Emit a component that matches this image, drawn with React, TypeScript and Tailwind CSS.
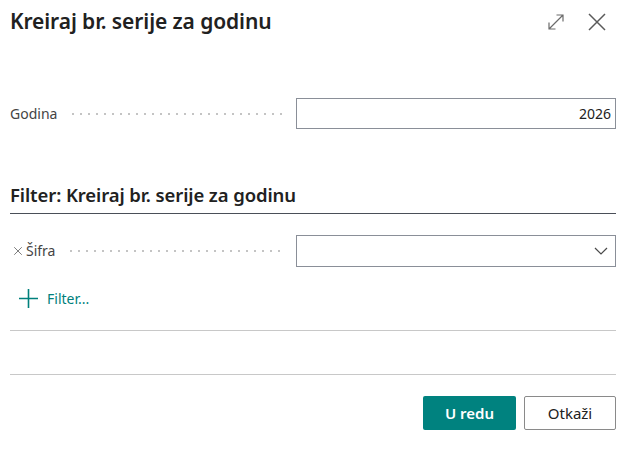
import { X } from "lucide-react";

const Dots = () => (
  <div className="flex-1 h-[4px] mx-[12px] bg-[radial-gradient(circle,#c4c4c4_1px,transparent_1.3px)] bg-[length:8px_4px] bg-repeat-x" />
);

const App = () => {
  return (
    <div className="w-[630px] h-[449px] bg-white pl-[10px] pr-[14px] text-[#212121] font-['Noto_Sans',sans-serif] overflow-hidden">
      <div className="flex items-center h-[44px]">
        <h1 className="text-[21px] font-semibold tracking-[-0.1px] mr-auto">Kreiraj br. serije za godinu</h1>
        <svg width="18" height="18" viewBox="0 0 18 18" className="mr-[22px] text-[#6b6b6b]" fill="none" stroke="currentColor" strokeWidth="1.2">
          <path d="M2 16 L16 2 M9.5 2 H16 V8.5 M2 9.5 V16 H8.5" />
        </svg>
        <svg width="20" height="20" viewBox="0 0 20 20" className="mr-[9px] text-[#5a5a5a]" fill="none" stroke="currentColor" strokeWidth="1.5">
          <path d="M2 2 L18 18 M18 2 L2 18" />
        </svg>
      </div>

      <div className="flex items-center mt-[54px] h-[31px]">
        <div className="flex items-center w-[286px]">
          <span className="text-[14px] text-[#444]">Godina</span>
          <Dots />
        </div>
        <div className="flex-1 h-[31px] border border-[#8a8f98] flex items-center justify-end px-[4px] text-[14px]">2026</div>
      </div>

      <div className="mt-[52px] border-b border-[#4a4f58] pb-[4px]">
        <h2 className="text-[18.5px] font-semibold tracking-[-0.1px]">Filter: Kreiraj br. serije za godinu</h2>
      </div>

      <div className="flex items-center mt-[21px] h-[32px]">
        <div className="flex items-center w-[286px]">
          <X size={14} className="ml-[1px] mr-[1px] text-[#555]" strokeWidth={1.3} />
          <span className="text-[14px] text-[#444]">Šifra</span>
          <Dots />
        </div>
        <div className="flex-1 h-[32px] border border-[#8a8f98] flex items-center justify-end pr-[7px]">
          <svg width="14" height="8" viewBox="0 0 14 8" fill="none" stroke="#4a4a4a" strokeWidth="1.2">
            <path d="M1 1 L7 7 L13 1" />
          </svg>
        </div>
      </div>

      <div className="flex items-center mt-[14px] h-[36px] text-[#00807c]">
        <svg width="19" height="19" viewBox="0 0 19 19" className="ml-[9px] mr-[9px]" fill="none" stroke="currentColor" strokeWidth="1.6">
          <path d="M9.5 0 V19 M0 9.5 H19" />
        </svg>
        <span className="text-[14px]">Filter...</span>
      </div>

      <div className="mt-[13px] border-b border-[#c8c8c8]" />
      <div className="mt-[43px] border-b border-[#c8c8c8]" />

      <div className="flex justify-end gap-[8px] mt-[21px]">
        <button className="w-[93px] h-[34px] rounded-[2px] bg-[#00827f] text-white text-[15px] font-semibold">U redu</button>
        <button className="w-[92px] h-[34px] rounded-[2px] border border-[#8a8a8a] bg-white text-[#212121] text-[15px]">Otkaži</button>
      </div>
    </div>
  );
};

export default App;
